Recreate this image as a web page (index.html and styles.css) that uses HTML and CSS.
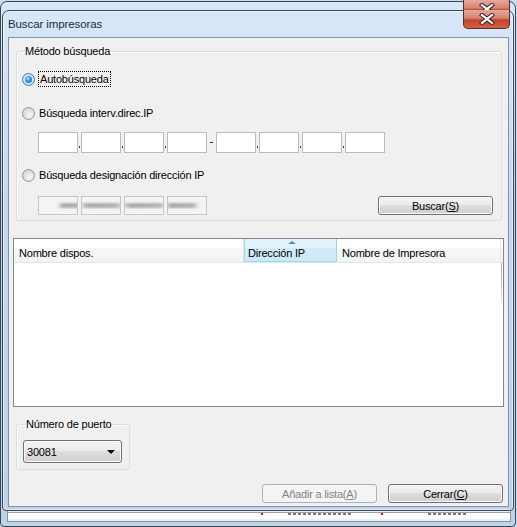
FILE: index.html
```html
<!DOCTYPE html>
<html lang="es">
<head>
    <meta charset="UTF-8">
    <title>Buscar impresoras</title>
    <link rel="stylesheet" href="styles.css">
</head>
<body>
    <div class="desk">
        <div class="win win-back">
            <div class="titlebar">
                <span class="close">
                    <svg width="16" height="12" viewBox="0 0 16 12">
                        <path d="M3 2 L13 10 M13 2 L3 10" stroke="#3b2a2a" stroke-width="4.2" stroke-linecap="square"/>
                        <path d="M3 2 L13 10 M13 2 L3 10" stroke="#ffffff" stroke-width="2.2" stroke-linecap="square"/>
                    </svg>
                </span>
            </div>
            <div class="client client-back">
                <div class="back-strip">
                    <span class="mark mark-a"></span>
                    <span class="frag frag-a"></span>
                    <span class="mark mark-b"></span>
                    <span class="frag frag-b"></span>
                </div>
            </div>
        </div>

        <div class="win win-front">
            <div class="titlebar">
                <span class="title">Buscar impresoras</span>
                <span class="close">
                    <svg width="16" height="12" viewBox="0 0 16 12">
                        <path d="M3 2 L13 10 M13 2 L3 10" stroke="#3b2a2a" stroke-width="4.2" stroke-linecap="square"/>
                        <path d="M3 2 L13 10 M13 2 L3 10" stroke="#ffffff" stroke-width="2.2" stroke-linecap="square"/>
                    </svg>
                </span>
            </div>
            <div class="client">
                <fieldset class="group method">
                    <legend>Método búsqueda</legend>
                    <div class="radio-row first">
                        <span class="radio checked"></span>
                        <span class="focus">Autobúsqueda</span>
                    </div>
                    <div class="radio-row second">
                        <span class="radio"></span>
                        <span>Búsqueda interv.direc.IP</span>
                    </div>
                    <div class="ip-row range">
                        <span class="ip-box"></span><span class="dot"></span>
                        <span class="ip-box"></span><span class="dot"></span>
                        <span class="ip-box"></span><span class="dot"></span>
                        <span class="ip-box"></span><span class="dash"></span>
                        <span class="ip-box"></span><span class="dot"></span>
                        <span class="ip-box"></span><span class="dot"></span>
                        <span class="ip-box"></span><span class="dot"></span>
                        <span class="ip-box"></span>
                    </div>
                    <div class="radio-row third">
                        <span class="radio"></span>
                        <span>Búsqueda designación dirección IP</span>
                    </div>
                    <div class="ip-row single">
                        <span class="ip-box off"><i class="smear s1"></i></span><span class="gap"></span>
                        <span class="ip-box off"><i class="smear s2"></i></span><span class="gap"></span>
                        <span class="ip-box off"><i class="smear s3"></i></span><span class="gap"></span>
                        <span class="ip-box off"><i class="smear s4"></i></span>
                        <button class="btn search">Buscar(<u>S</u>)</button>
                    </div>
                </fieldset>

                <div class="list">
                    <div class="list-head">
                        <div class="col col-name">Nombre dispos.</div>
                        <div class="col col-ip sorted">Dirección IP</div>
                        <div class="col col-printer">Nombre de Impresora</div>
                    </div>
                    <div class="list-body">
                        <span class="scroll-edge"></span>
                    </div>
                </div>

                <fieldset class="group port">
                    <legend>Número de puerto</legend>
                    <div class="combo">
                        <span>30081</span>
                        <span class="arrow"></span>
                    </div>
                </fieldset>

                <div class="actions">
                    <button class="btn disabled">Añadir a lista(<u>A</u>)</button>
                    <button class="btn">Cerrar(<u>C</u>)</button>
                </div>
            </div>
        </div>
    </div>
</body>
</html>
```

FILE: styles.css
```css
body {
    margin: 0;
    background: #c9dcf0;
    font-family: 'Segoe UI', 'Liberation Sans', sans-serif;
    font-size: 11px;
    letter-spacing: -0.2px;
    color: #000;
}
.desk {
    position: relative;
    width: 517px;
    height: 527px;
    overflow: hidden;
}

/* windows */
.win {
    position: absolute;
    box-sizing: border-box;
    border: 1px solid #3d4650;
    border-radius: 7px 7px 4px 4px;
    background: linear-gradient(180deg, #d7e7f8 0%, #c3d8ef 40%, #bcd3ec 100%);
    display: flex;
    flex-direction: column;
}
.win-back {
    left: 0;
    top: 1px;
    width: 516px;
    height: 526px;
    padding: 0 4px 4px 6px;
}
.win-front {
    left: 2px;
    top: 10px;
    width: 512px;
    height: 501px;
    padding: 0 4px 3px 5px;
    box-shadow: 0 0 0 1px rgba(255, 255, 255, 0.5) inset;
}
.titlebar {
    height: 26px;
    flex: none;
    display: flex;
    align-items: center;
    position: relative;
}
.title {
    padding-bottom: 1px;
    font-size: 11.5px;
    letter-spacing: -0.1px;
    color: #1e2a38;
}
.close {
    position: absolute;
    top: -1px;
    right: -1px;
    width: 47px;
    height: 19px;
    box-sizing: border-box;
    border: 1px solid #54312c;
    border-top: none;
    border-radius: 0 0 5px 5px;
    background: linear-gradient(180deg, #e4a99f 0%, #d7826f 45%, #c3422b 55%, #d2623e 100%);
    display: flex;
    align-items: center;
    justify-content: center;
}
.win-back .close {
    top: -2px;
    right: 1px;
}

.client {
    flex: 1;
    background: #f0f0f0;
    border: 1px solid #8293a6;
    display: flex;
    flex-direction: column;
}
.client-back {
    justify-content: flex-end;
}
.back-strip {
    height: 6px;
    background: #fff;
    border-top: 1px solid #a0a0a0;
    position: relative;
    margin-bottom: 2px;
}
.mark {
    position: absolute;
    top: 0;
    width: 2px;
    height: 2px;
    background: #e01010;
}
.mark-a { left: 253px; }
.mark-b { left: 373px; }
.frag {
    position: absolute;
    top: 0;
    height: 2px;
    background: repeating-linear-gradient(90deg, #777 0 3px, transparent 3px 5px);
}
.frag-a { left: 280px; width: 64px; }
.frag-b { left: 420px; width: 38px; }

/* group boxes */
.group {
    margin: 6px 6px 0 7px;
    padding: 12px 8px 5px 5px;
    border: 1px solid #d5dfe5;
    border-radius: 3px;
    box-shadow: 1px 1px 0 #fff inset;
    min-width: 0;
}
.group legend {
    padding: 0 1px;
    margin-left: 2px;
    line-height: 15px;
}
.radio-row {
    height: 16px;
    display: flex;
    align-items: center;
    gap: 4px;
}
.radio-row.second { margin-top: 18px; }
.radio-row.third { margin-top: 14px; }
.radio {
    width: 13px;
    height: 13px;
    box-sizing: border-box;
    border-radius: 50%;
    border: 1px solid #959595;
    background: radial-gradient(circle at 60% 65%, #f8f8f8 0%, #e2e2e2 45%, #cbcbcb 100%);
    position: relative;
}
.radio.checked {
    border-color: #3c7fb1;
    background: radial-gradient(circle at 50% 50%, #e9f4fb, #bcd8ec);
}
.radio.checked::after {
    content: "";
    position: absolute;
    left: 2px;
    top: 2px;
    width: 7px;
    height: 7px;
    border-radius: 50%;
    background: radial-gradient(circle at 40% 35%, #a6e4ff 0%, #2a9ae0 45%, #1a5c94 100%);
}
.focus {
    outline: 1px dotted #000;
    outline-offset: 0;
    padding: 0 1px;
    line-height: 14px;
}

.ip-row {
    display: flex;
    align-items: stretch;
    padding-left: 16px;
}
.ip-row.range {
    height: 21px;
    margin-top: 11px;
}
.ip-row.single {
    height: 19px;
    margin-top: 13px;
}
.ip-box {
    width: 40px;
    box-sizing: border-box;
    border: 1px solid #bcbcbc;
    background: #fff;
    position: relative;
    overflow: hidden;
}
.ip-box.off {
    background: #f4f4f4;
    border-color: #c6c6c6;
}
.dot,
.gap {
    width: 3px;
    position: relative;
}
.dot::after {
    content: "";
    position: absolute;
    left: 1px;
    bottom: 5px;
    width: 1px;
    height: 2px;
    background: #333;
}
.dash {
    width: 9px;
    position: relative;
}
.dash::after {
    content: "";
    position: absolute;
    left: 3px;
    top: 10px;
    width: 3px;
    height: 1px;
    background: #333;
}
.smear {
    position: absolute;
    top: 6px;
    height: 5px;
    background: linear-gradient(90deg, transparent, #a9a9a9 20%, #b4b4b4 80%, transparent);
    filter: blur(1.2px);
}
.s1 { left: 18px; width: 30px; }
.s2 { left: -4px; width: 48px; }
.s3 { left: -4px; width: 48px; }
.s4 { left: -4px; width: 36px; }

/* buttons */
.btn {
    width: 115px;
    height: 19px;
    box-sizing: border-box;
    padding: 0;
    border: 1px solid #707070;
    border-radius: 3px;
    background: linear-gradient(180deg, #f2f2f2 0%, #ebebeb 49%, #dddddd 50%, #cfcfcf 100%);
    box-shadow: 0 0 0 1px #fcfcfc inset;
    font: inherit;
    letter-spacing: inherit;
    color: #000;
}
.btn.search {
    margin-left: auto;
}
.btn.disabled {
    border-color: #adb2b5;
    background: #f4f4f4;
    box-shadow: none;
    color: #838383;
}
.btn u {
    text-underline-offset: 1px;
}

/* list view */
.list {
    margin: 17px 4px 0 4px;
    height: 169px;
    box-sizing: border-box;
    border: 1px solid #828790;
    background: #fff;
    display: flex;
    flex-direction: column;
}
.list-head {
    height: 23px;
    display: flex;
    background: linear-gradient(180deg, #ffffff 0%, #ffffff 40%, #f6f7f8 41%, #f2f3f4 100%);
    border-bottom: 1px solid #e5e5e5;
}
.col {
    box-sizing: border-box;
    padding: 8px 0 0 5px;
    border-right: 1px solid #e3e5e7;
    white-space: nowrap;
}
.col-name { width: 230px; }
.col-ip { width: 93px; }
.col-printer { flex: 1; padding-left: 5px; margin-right: 2px; }
.col.sorted {
    position: relative;
    background: linear-gradient(180deg, #e3f3fc 0%, #e3f3fc 40%, #d3ebf9 41%, #cde8f7 100%);
    border: 1px solid #96d9f9;
    border-top: none;
    padding-left: 3px;
}
.col.sorted::before {
    content: "";
    position: absolute;
    left: 43px;
    top: 2px;
    border-left: 4px solid transparent;
    border-right: 4px solid transparent;
    border-bottom: 3px solid #5b89b4;
}
.list-body {
    flex: 1;
    position: relative;
}
.scroll-edge {
    position: absolute;
    right: 1px;
    top: 0;
    width: 1px;
    height: 40px;
    background: linear-gradient(180deg, #a8a8a8, #e8e8e8);
}

/* port group */
.group.port {
    width: 114px;
    box-sizing: border-box;
    margin-top: 10px;
    padding: 8px 0 6px 6px;
}
.combo {
    width: 99px;
    height: 23px;
    box-sizing: border-box;
    border: 1px solid #707070;
    border-radius: 3px;
    background: linear-gradient(180deg, #f2f2f2 0%, #ebebeb 49%, #dddddd 50%, #cfcfcf 100%);
    box-shadow: 0 0 0 1px #fcfcfc inset;
    display: flex;
    align-items: center;
    justify-content: space-between;
    padding: 0 6px 0 3px;
}
.arrow {
    border-left: 4px solid transparent;
    border-right: 4px solid transparent;
    border-top: 4px solid #000;
}

.actions {
    display: flex;
    justify-content: flex-end;
    gap: 11px;
    margin: 14px 5px 0 0;
}
```
